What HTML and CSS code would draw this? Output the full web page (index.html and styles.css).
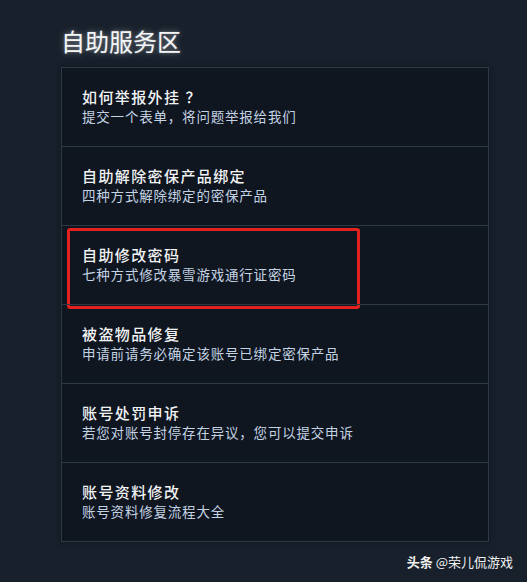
FILE: index.html
```html
<!DOCTYPE html>
<html lang="zh">
<head>
<meta charset="utf-8">
<link rel="stylesheet" href="styles.css">
</head>
<body>
<main class="page">
  <h1 class="heading">自助服务区</h1>
  <ul class="panel">
    <li class="row"><div class="row-title">如何举报外挂<span class="q">？</span></div><div class="row-sub">提交一个表单，将问题举报给我们</div></li>
    <li class="row"><div class="row-title">自助解除密保产品绑定</div><div class="row-sub">四种方式解除绑定的密保产品</div></li>
    <li class="row row-marked"><div class="row-title">自助修改密码</div><div class="row-sub">七种方式修改暴雪游戏通行证密码</div><span class="mark"></span></li>
    <li class="row"><div class="row-title">被盗物品修复</div><div class="row-sub">申请前请务必确定该账号已绑定密保产品</div></li>
    <li class="row"><div class="row-title">账号处罚申诉</div><div class="row-sub">若您对账号封停存在异议，您可以提交申诉</div></li>
    <li class="row"><div class="row-title">账号资料修改</div><div class="row-sub">账号资料修复流程大全</div></li>
  </ul>
  <div class="watermark"><b>头条</b> @荣儿侃游戏</div>
</main>
</body>
</html>
```
FILE: styles.css
```css
html, body {
  margin: 0;
  padding: 0;
  background: #17202b;
}
body {
  width: 527px;
  height: 582px;
  overflow: hidden;
  font-family: "Noto Sans CJK SC", "Noto Sans", sans-serif;
  text-spacing-trim: space-all;
}
.page {
  padding: 24px 38px 0 61px;
}
.heading {
  margin: 0;
  height: 43px;
  font-size: 24px;
  line-height: 34px;
  font-weight: 400;
  color: #f4f6f8;
  text-shadow: 0 0 6px rgba(255,255,255,0.45), 0 0 2px rgba(255,255,255,0.3);
}
.panel {
  list-style: none;
  margin: 0;
  padding: 0;
  width: 426px;
  background: #0f1620;
  border: 1px solid #2d3947;
  box-shadow: 0 0 6px rgba(0,0,0,0.35);
}
.row {
  position: relative;
  height: 78px;
  box-sizing: content-box;
  padding: 0 0 0 20px;
  border-top: 1px solid #2d3947;
}
.row:first-child {
  border-top: none;
}
.row-title {
  padding-top: 19px;
  font-size: 15px;
  line-height: 20px;
  font-weight: 500;
  color: #f2f3f5;
  letter-spacing: 1.4px;
}
.q {
  padding-left: 5px;
}
.row-sub {
  font-size: 13.5px;
  line-height: 19px;
  color: #c3d3e3;
  letter-spacing: 0.8px;
}
.mark {
  position: absolute;
  left: 5px;
  top: 2px;
  width: 287px;
  height: 75px;
  border: 3px solid #e3211e;
  border-radius: 3px;
}
.watermark {
  margin-top: 11px;
  text-align: right;
  margin-right: -24px;
  font-size: 13px;
  line-height: 18px;
  color: #f2f2f2;
}
.watermark b {
  font-weight: 700;
}
```
